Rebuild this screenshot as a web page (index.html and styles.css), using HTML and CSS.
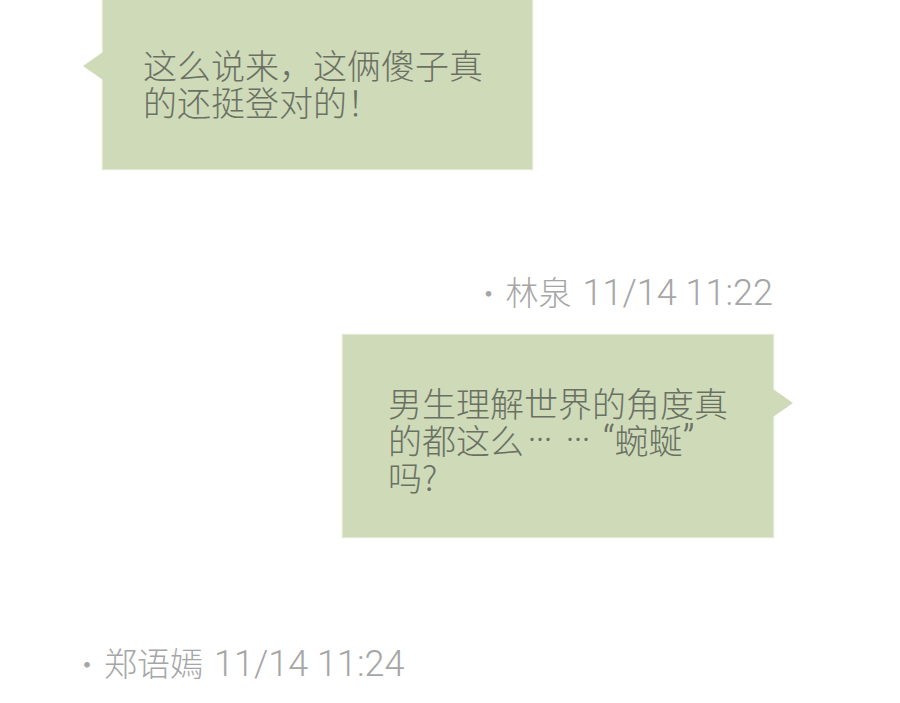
FILE: index.html
```html
<!DOCTYPE html>
<html lang="zh-CN">
<head>
    <meta charset="UTF-8">
    <meta name="viewport" content="width=device-width, initial-scale=1.0">
    <title>聊天记录</title>
    <link rel="stylesheet" href="styles.css">
</head>
<body>
    <div class="chat">
        <div class="msg msg-left">
            <div class="bubble bubble-left first">
                这么说来，这俩傻子真<br>的还挺登对的！
            </div>
        </div>

        <div class="meta meta-right">
            <span class="dot">·</span><span class="name">林泉</span><span class="time">11/14 11:22</span>
        </div>

        <div class="msg msg-right">
            <div class="bubble bubble-right">
                男生理解世界的角度真<br>的都这么<span class="dots">⋯ ⋯</span><span class="quote"><span class="q">“</span>蜿蜒<span class="q">”</span></span><br>吗?
            </div>
        </div>

        <div class="meta meta-left">
            <span class="dot">·</span><span class="name">郑语嫣</span><span class="time">11/14 11:24</span>
        </div>
    </div>
</body>
</html>
```

FILE: styles.css
```css
body {
    margin: 0;
    background: #ffffff;
    font-family: "Noto Sans CJK SC", "Noto Sans", sans-serif;
}
.chat {
    width: 900px;
    height: 703px;
    overflow: hidden;
    display: flex;
    flex-direction: column;
}
.msg {
    display: flex;
}
.msg-left {
    padding-left: 103px;
}
.msg-right {
    justify-content: flex-end;
    padding-right: 127px;
    margin-top: 22px;
}
.bubble {
    position: relative;
    background: #cfdab9;
    color: #6a7163;
    font-size: 34px;
    font-weight: 300;
    line-height: 37px;
    box-shadow: 0 0 1px 1px rgba(207, 218, 185, 0.6);
}
.bubble::before {
    content: "";
    position: absolute;
    width: 20px;
    height: 28px;
    background: #cfdab9;
}
.bubble-left {
    width: 389px;
    height: 74px;
    padding: 46px 0 49px 40px;
}
.bubble-left::before {
    left: -20px;
    top: 52px;
    clip-path: polygon(100% 0, 0 50%, 100% 100%);
}
.bubble-right {
    width: 385px;
    height: 111px;
    padding: 49px 0 42px 45px;
}
.bubble-right::before {
    right: -20px;
    top: 54px;
    clip-path: polygon(0 0, 100% 50%, 0 100%);
}
.dots {
    font-family: "DejaVu Sans", sans-serif;
    font-size: 24px;
    line-height: 0;
    letter-spacing: 3px;
    margin-left: 4px;
    vertical-align: 6px;
}
.quote {
    margin-left: 10px;
}
.q {
    font-family: Roboto, sans-serif;
    font-size: 40px;
    font-weight: 300;
    line-height: 0;
}
.meta {
    display: flex;
    align-items: baseline;
    color: #a6a6a6;
    font-weight: 300;
    line-height: 40px;
}
.meta .dot {
    font-size: 30px;
    margin-right: 2px;
}
.meta .name {
    font-size: 33px;
    margin-right: 11px;
}
.meta .time {
    font-family: Roboto, "Noto Sans", sans-serif;
    font-size: 36px;
}
.meta-right {
    margin-top: 102px;
    justify-content: flex-end;
    padding-right: 127px;
}
.meta-left {
    margin-top: 105px;
    padding-left: 72px;
}
```
